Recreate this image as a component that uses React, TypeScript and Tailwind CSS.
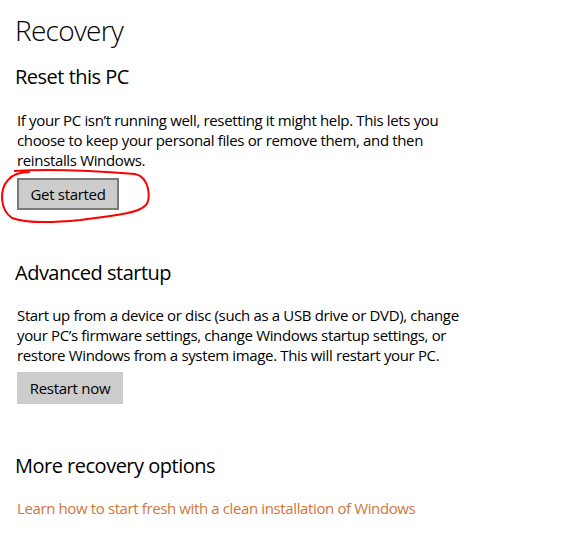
export default function App() {
  const font = { fontFamily: '"Open Sans", "Noto Sans", sans-serif' };
  return (
    <div className="relative w-[566px] h-[549px] bg-white text-black" style={font}>
      <div className="flex flex-col items-start pl-[15px] pt-[11px]">
        <h1 className="text-[28px] leading-[38px] font-light tracking-[-0.7px]">Recovery</h1>
        <h2 className="mt-[14px] text-[20px] leading-[28px] font-normal tracking-[-0.5px]">Reset this PC</h2>
        <p className="mt-[19px] ml-[2px] w-[465px] text-[15px] leading-[20px] tracking-[-0.35px]">
          If your PC isn’t running well, resetting it might help. This lets you choose to keep your personal files or remove them, and then reinstalls Windows.
        </p>
        <button className="mt-[8px] ml-[2px] w-[102px] h-[32px] border-2 border-[#7a7a7a] bg-[#cccccc] text-[15px] leading-[20px] tracking-[-0.3px]">
          Get started
        </button>
        <h2 className="mt-[49px] text-[20px] leading-[28px] font-normal tracking-[-0.5px]">Advanced startup</h2>
        <p className="mt-[18px] ml-[2px] w-[465px] text-[15px] leading-[20px] tracking-[-0.35px]">
          Start up from a device or disc (such as a USB drive or DVD), change your PC’s firmware settings, change Windows startup settings, or restore Windows from a system image. This will restart your PC.
        </p>
        <button className="mt-[7px] ml-[2px] w-[106px] h-[32px] bg-[#cccccc] text-[15px] leading-[20px] tracking-[-0.3px]">
          Restart now
        </button>
        <h2 className="mt-[48px] text-[20px] leading-[28px] font-normal tracking-[-0.5px]">More recovery options</h2>
        <a className="mt-[18px] ml-[2px] text-[15px] leading-[20px] tracking-[-0.38px] text-[#d0763a]">
          Learn how to start fresh with a clean installation of Windows
        </a>
      </div>
      <svg className="absolute left-0 top-0 pointer-events-none" width="566" height="549">
        <path
          d="M 14 171 C 60 168, 110 172, 135 174 C 150 177, 151 200, 146 205 C 138 214, 110 216, 80 220 C 50 223, 25 223, 12 218 C 0 210, -1 190, 8 180 C 12 175, 20 172, 30 172"
          fill="none"
          stroke="#ff0000"
          strokeWidth="2"
        />
      </svg>
    </div>
  );
}
